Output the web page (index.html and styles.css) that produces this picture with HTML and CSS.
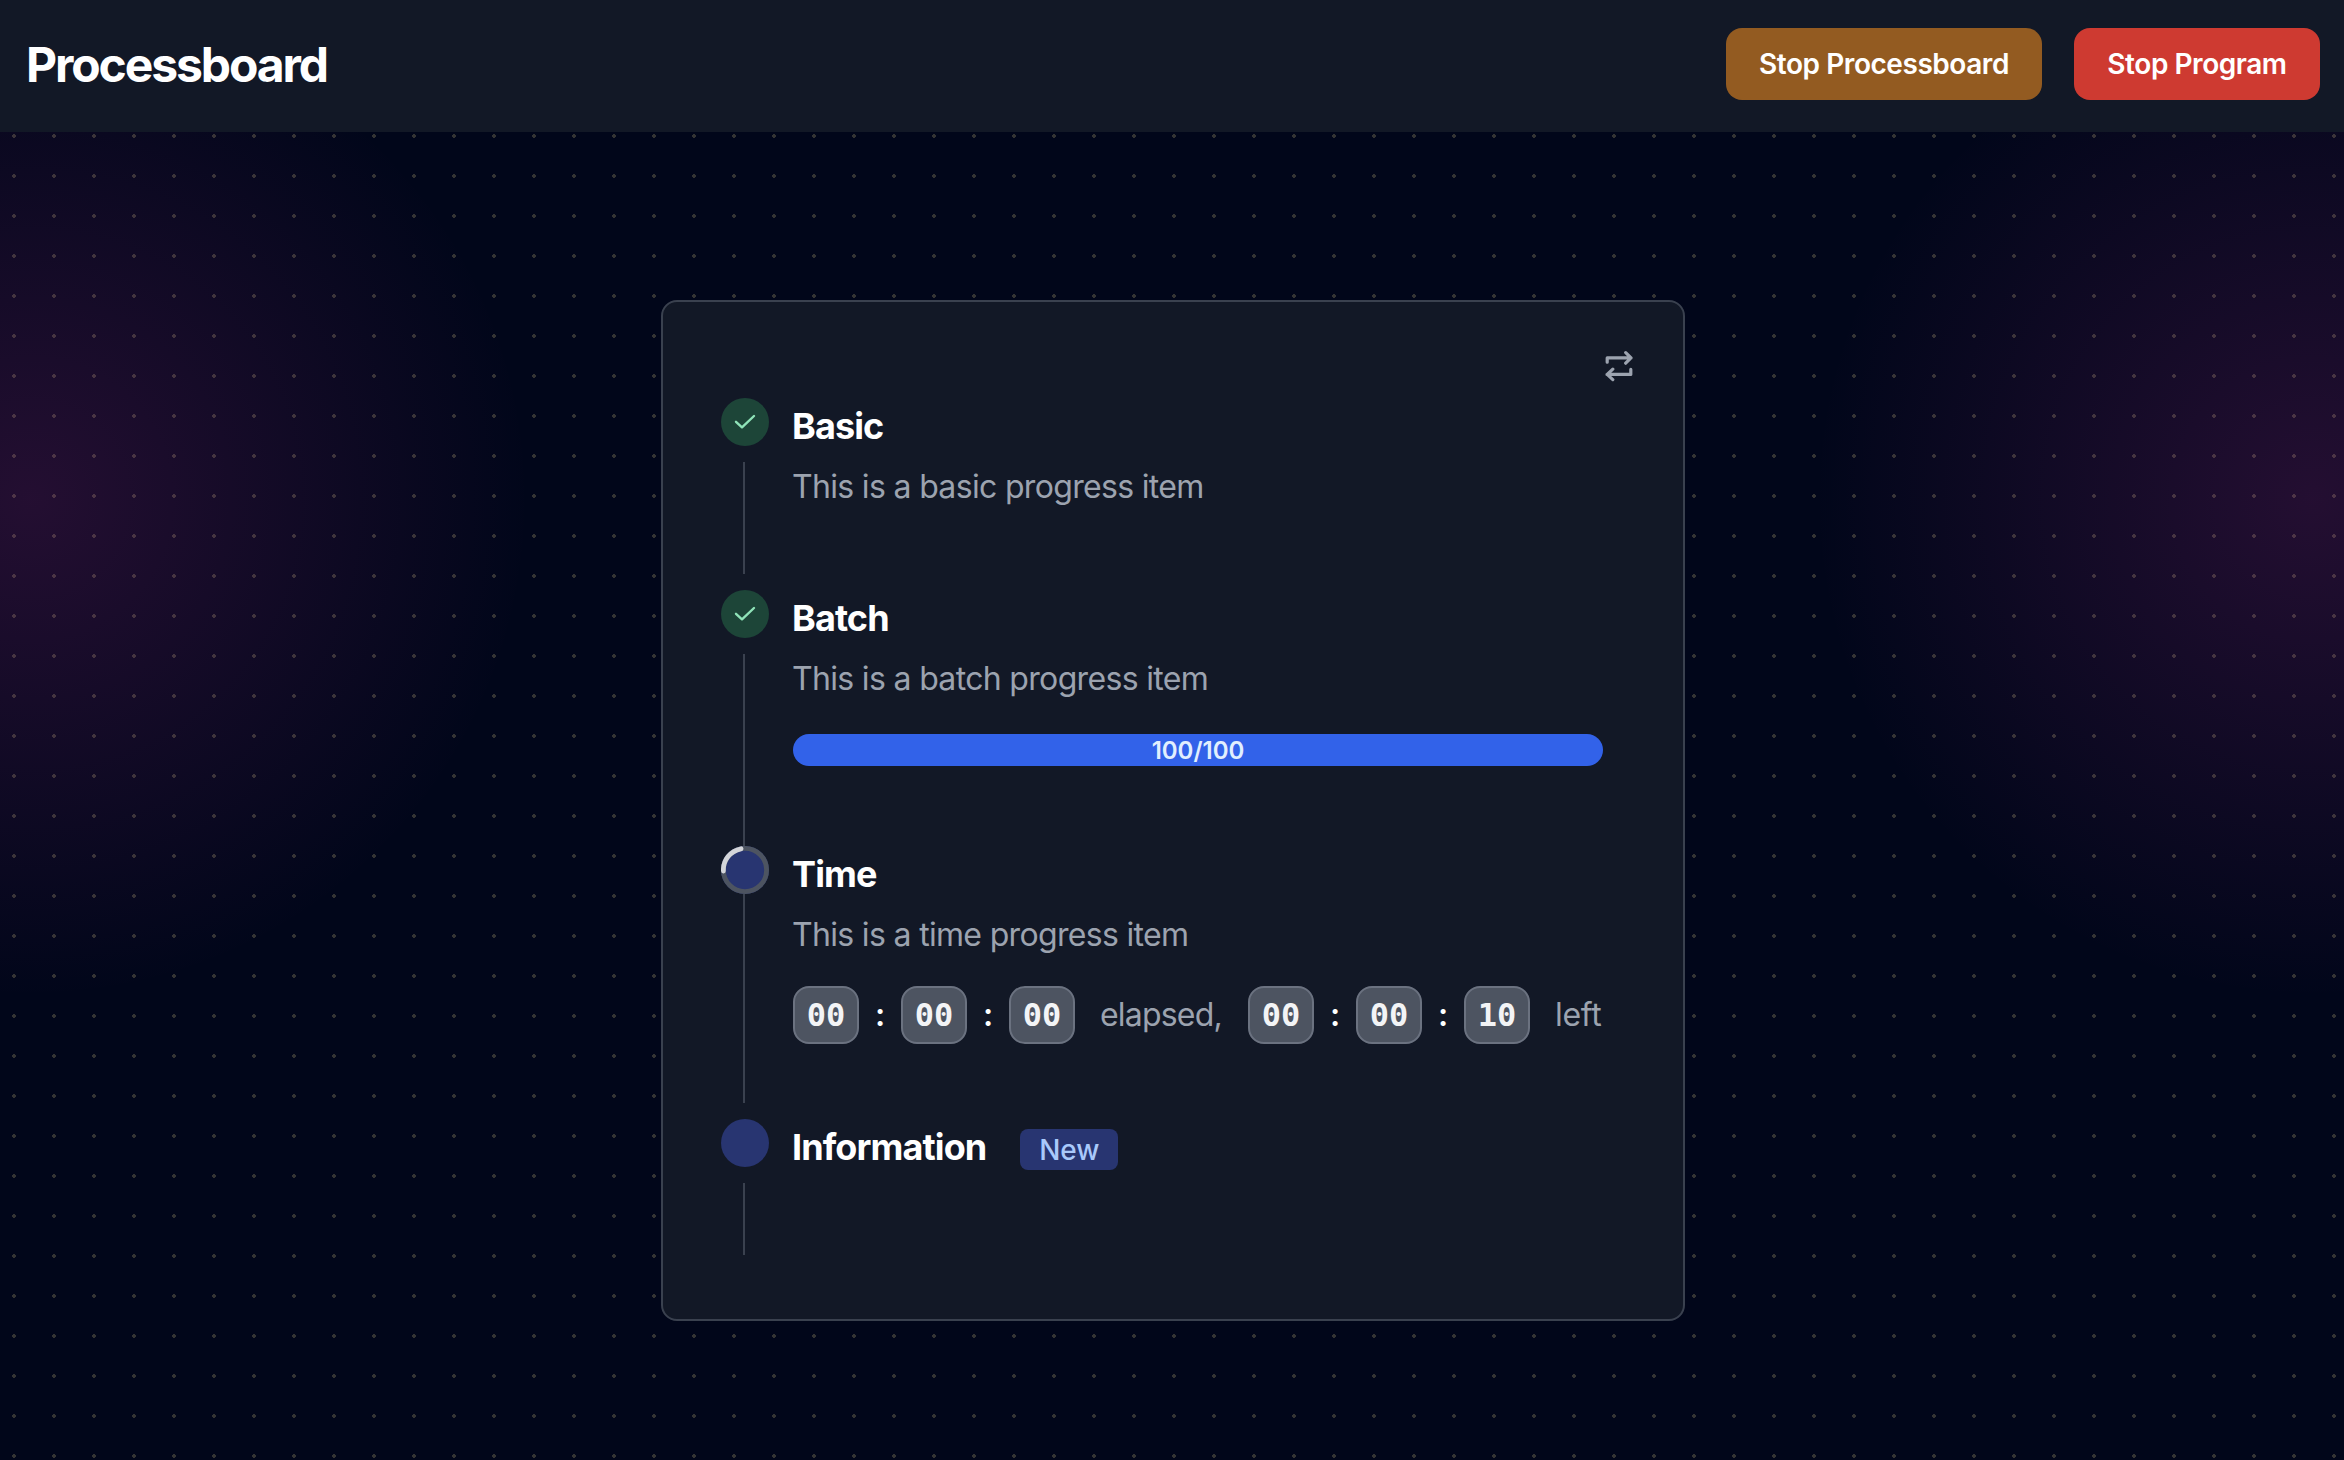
FILE: index.html
```html
<!DOCTYPE html>
<html lang="en">
<head>
<meta charset="utf-8">
<title>Processboard</title>
<link rel="stylesheet" href="styles.css">
</head>
<body>
<header class="topbar">
  <h1 class="brand">Processboard</h1>
  <div class="actions">
    <button class="btn btn-warn">Stop Processboard</button>
    <button class="btn btn-danger">Stop Program</button>
  </div>
</header>
<main class="stage">
  <section class="card">
    <div class="tools">
      <svg class="repeat" viewBox="0 0 28 32" fill="none" stroke="currentColor" stroke-width="3.2" stroke-linecap="round" stroke-linejoin="round"><path d="M2.2 12.2V7.9H26M20.7 2.6L26 7.9L20.7 13.2M25.8 19.4V24.4H2M7.8 19.2L2.2 24.4L7.8 29.6"/></svg>
    </div>
    <ol class="steps">
      <li class="step step-basic">
        <div class="rail"><span class="dot done"><svg class="check" viewBox="0 0 22 16"><path d="M2 7.8L8 13.3L20 2"/></svg></span><i class="line"></i></div>
        <div class="body"><h3 class="name">Basic</h3><p class="desc">This is a basic progress item</p></div>
      </li>
      <li class="step step-batch">
        <div class="rail"><span class="dot done"><svg class="check" viewBox="0 0 22 16"><path d="M2 7.8L8 13.3L20 2"/></svg></span><i class="line line-join"></i></div>
        <div class="body"><h3 class="name">Batch</h3><p class="desc">This is a batch progress item</p>
          <div class="bar">100/100</div></div>
      </li>
      <li class="step step-time">
        <div class="rail"><span class="dot"><svg class="ring" viewBox="0 0 48 48"><circle cx="24" cy="24" r="21.6"/><path d="M2.4 25A21.6 21.6 0 0 1 20 2.8"/></svg></span><i class="line line-flush"></i></div>
        <div class="body"><h3 class="name">Time</h3><p class="desc">This is a time progress item</p>
          <div class="clock">
            <div class="digits"><kbd>00</kbd><b>:</b><kbd>00</kbd><b>:</b><kbd>00</kbd></div>
            <span class="unit unit-elapsed">elapsed,</span>
            <div class="digits"><kbd>00</kbd><b>:</b><kbd>00</kbd><b>:</b><kbd>10</kbd></div>
            <span class="unit unit-left">left</span>
          </div></div>
      </li>
      <li class="step step-info">
        <div class="rail"><span class="dot"></span><i class="line"></i></div>
        <div class="body"><h3 class="name">Information<span class="badge">New</span></h3></div>
      </li>
    </ol>
  </section>
</main>
</body>
</html>
```
FILE: styles.css
```css
* { box-sizing: border-box; }
body { margin: 0; height: 1460px; display: flex; flex-direction: column; overflow: hidden; background: #01061a; color: #fff; font-family: Inter, "Liberation Sans", sans-serif; }
h1, h3, p, ol { margin: 0; padding: 0; }
.topbar { height: 132px; flex: none; display: flex; align-items: center; justify-content: space-between; padding: 0 24px 4px 26px; background: #121826; }
.brand { padding-top: 2px; font-size: 48px; line-height: 56px; font-weight: 700; letter-spacing: -2.1px; }
.actions { display: flex; gap: 32px; }
.btn { height: 72px; border: 0; border-radius: 16px; padding: 0; color: #fff; font: 600 28px/40px Inter, "Liberation Sans", sans-serif; letter-spacing: -0.45px; white-space: nowrap; }
.btn-warn { width: 316px; background: #935b21; }
.btn-danger { width: 246px; background: #ce3a31; }
.stage {
  flex: 1; display: flex; justify-content: center; align-items: flex-start; padding: 168px 0 0 2px;
  background:
    radial-gradient(circle 500px at 31px 367px, rgba(235,62,184,.15), rgba(235,62,184,0)),
    radial-gradient(circle 500px at 2313px 367px, rgba(235,62,184,.15), rgba(235,62,184,0)),
    radial-gradient(circle at 20px 20px, #343434 2px, transparent 2px) -6px -16px / 40px 40px,
    #01061a;
}
.card { width: 1024px; height: 1021px; border: 2px solid #3a414f; border-radius: 16px; background: #121826; padding: 46px 80px 0 58px; }
.tools { height: 50px; display: flex; justify-content: flex-end; align-items: flex-start; margin-right: -30px; }
.repeat { width: 28px; height: 32px; margin-top: 2px; color: #9ca3af; }
.steps { list-style: none; }
.step { display: flex; gap: 24px; }
.step-basic { height: 192px; }
.step-batch { height: 256px; }
.step-time { height: 273px; }
.step-info { height: 152px; }
.rail { width: 48px; flex: none; display: flex; flex-direction: column; padding-bottom: 16px; }
.dot { width: 48px; height: 48px; flex: none; border-radius: 50%; background: #283571; display: flex; align-items: center; justify-content: center; }
.done { background: #1d4538; }
.check { width: 22px; height: 16px; fill: none; stroke: #8fe3b8; stroke-width: 2.4; stroke-linecap: round; stroke-linejoin: round; }
.ring { width: 48px; height: 48px; fill: none; stroke: #4d5461; stroke-width: 4.8; }
.ring path { stroke: #d3d5da; stroke-linecap: round; }
.line { flex: 1; width: 2px; margin: 16px 0 0 22px; background: #3a414f; }
.line-join { margin-bottom: -16px; }
.line-flush { margin-top: 0; }
.body { flex: 1; min-width: 0; padding-top: 6px; }
.name { height: 44px; display: flex; align-items: center; font-size: 36px; line-height: 44px; font-weight: 650; letter-spacing: -0.9px; text-indent: -1px; }
.desc { margin-top: 15px; font-size: 32px; line-height: 48px; letter-spacing: -0.67px; text-indent: -1px; font-weight: 430; color: #9ca3af; }
.bar { height: 32px; margin-top: 31px; border-radius: 16px; background: #3262e9; color: #e1effe; font-size: 24px; line-height: 34px; font-weight: 600; text-align: center; }
.clock { margin-top: 27px; display: flex; align-items: center; height: 58px; }
.digits { display: flex; align-items: center; }
.digits kbd { width: 66px; height: 58px; border: 2px solid #6b7280; border-radius: 16px; background: #4d5461; color: #f3f4f6; font: 700 32px/54px "DejaVu Sans Mono", monospace; text-align: center; }
.digits b { width: 42px; text-align: center; font-size: 32px; line-height: 48px; font-weight: 600; }
.unit { font-size: 32px; line-height: 48px; font-weight: 430; letter-spacing: -0.8px; color: #9ca3af; white-space: nowrap; }
.unit-elapsed { width: 173px; padding-left: 25px; }
.unit-left { padding-left: 25px; letter-spacing: -0.3px; }
.badge { margin: 5px 0 0 34px; width: 98px; height: 41px; border-radius: 8px; background: #283571; color: #a9c9fb; font-size: 28px; line-height: 42px; font-weight: 500; letter-spacing: 0; text-align: center; text-indent: 0; }
```
